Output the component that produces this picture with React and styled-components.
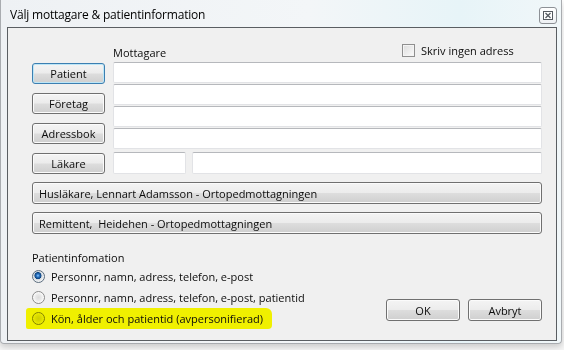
import React from "react";
import styled, { createGlobalStyle, css } from "styled-components";

const GlobalStyle = createGlobalStyle`
  html, body {
    margin: 0;
    padding: 0;
    background: #ffffff;
  }
  body {
    font-family: "Open Sans", "Noto Sans", sans-serif;
    font-size: 11px;
    color: #0c0c0c;
  }
  #root {
    width: 564px;
    height: 350px;
    overflow: hidden;
  }
`;

const Screen = styled.div`
  width: 564px;
  height: 350px;
  background: linear-gradient(#ffffff, #f6f6f6);
`;

const Window = styled.div`
  width: 562px;
  height: 344px;
  box-sizing: border-box;
  display: flex;
  flex-direction: column;
  padding: 0 4px 2px 6px;
  border: 1px solid #a9acb0;
  border-top: none;
  border-radius: 0 0 4px 4px;
  background: linear-gradient(90deg, #eef1f4 0%, #f3f6f8 55%, #e7f4f8 82%, #f1f7f9 100%);
  box-shadow: 0 3px 6px rgba(0, 0, 0, 0.18);
`;

const TitleBar = styled.div`
  height: 27px;
  display: flex;
  align-items: flex-start;
  justify-content: space-between;
  padding-left: 3px;
`;

const Title = styled.span`
  margin-top: 7px;
  font-size: 12px;
  line-height: 16px;
  letter-spacing: -0.2px;
  color: #000;
`;

const CloseButton = styled.div`
  margin-top: 7px;
  width: 18px;
  height: 17px;
  box-sizing: border-box;
  border: 1px solid #8d9196;
  border-radius: 3px;
  background: linear-gradient(#ffffff, #eef1f4);
  display: flex;
  align-items: center;
  justify-content: center;
`;

const Panel = styled.div`
  flex: 1;
  box-sizing: border-box;
  border: 1px solid #5a5e62;
  background: #f0f0f0;
  padding: 14px 14px 0 24px;
  display: flex;
  flex-direction: column;
`;

const HeaderRow = styled.div`
  height: 20px;
  display: grid;
  grid-template-columns: 81px 289px 1fr;
  align-items: center;
`;

const FieldLabel = styled.span`
  grid-column: 2;
  font-size: 11px;
  line-height: 14px;
  padding-top: 2px;
`;

const CheckOption = styled.label`
  display: flex;
  align-items: center;
  gap: 6px;
  align-self: start;
  margin-top: 1px;
  font-size: 11px;
`;

const CheckBox = styled.span`
  width: 13px;
  height: 13px;
  box-sizing: border-box;
  border: 1px solid #8f8f8f;
  background: linear-gradient(135deg, #dcdcdc, #fbfbfb);
  box-shadow: inset 0 0 0 1px #f4f4f4;
`;

const RecipientArea = styled.div`
  display: flex;
  gap: 8px;
`;

const ButtonColumn = styled.div`
  width: 73px;
  display: flex;
  flex-direction: column;
  gap: 9px;
  padding-top: 1px;
`;

const FieldColumn = styled.div`
  flex: 1;
  display: flex;
  flex-direction: column;
  gap: 1px;
`;

const FieldRow = styled.div`
  display: flex;
  gap: 6px;
  margin-top: 2px;
`;

const Field = styled.div`
  height: 22px;
  box-sizing: border-box;
  flex: ${(p) => (p.$width ? `0 0 ${p.$width}px` : "1")};
  background: #ffffff;
  border: 1px solid #e2e3e6;
  border-top-color: #b6b8bc;
  border-radius: 2px;
`;

const buttonSurface = css`
  box-sizing: border-box;
  border: 1px solid #707070;
  border-radius: 3px;
  background: linear-gradient(#f4f4f4 0%, #ececec 48%, #dddddd 52%, #cfcfcf 100%);
  box-shadow: inset 0 0 0 1px #fbfbfb;
  font-family: inherit;
  font-size: 11px;
  color: #0c0c0c;
  padding: 0;
  cursor: default;
`;

const Button = styled.button`
  ${buttonSurface};
  height: 21px;
  width: ${(p) => p.$width || 73}px;
  text-align: center;
  line-height: 18px;
  ${(p) =>
    p.$focused &&
    css`
      border-color: #3c7fb1;
      box-shadow: inset 0 0 0 1px #bde6f7;
    `}
`;

const WideButton = styled.button`
  ${buttonSurface};
  height: 22px;
  width: 100%;
  text-align: left;
  padding-left: 6px;
  line-height: 19px;
`;

const WideStack = styled.div`
  display: flex;
  flex-direction: column;
  gap: 8px;
  margin-top: 8px;
`;

const BottomArea = styled.div`
  display: flex;
  justify-content: space-between;
  margin-top: 16px;
`;

const RadioGroup = styled.div`
  display: flex;
  flex-direction: column;
`;

const GroupLabel = styled.div`
  height: 16px;
  line-height: 16px;
  font-size: 11px;
`;

const RadioRow = styled.div`
  height: 21px;
  display: flex;
  align-items: center;
  gap: 6px;
  font-size: 11px;
  ${(p) =>
    p.$marked &&
    css`
      margin-left: -6px;
      padding-left: 6px;
      width: 240px;
      background: #f0f000;
      border-radius: 3px 6px 4px 2px;
    `}
`;

const Radio = styled.span`
  width: 13px;
  height: 13px;
  box-sizing: border-box;
  border-radius: 50%;
  border: 1px solid #8b8b8b;
  background: radial-gradient(circle at 50% 50%, #dcdcdc 0, #e9e9e9 3px, #f8f8f8 5px, #fefefe 6px);
  flex-shrink: 0;
  ${(p) =>
    p.$checked &&
    css`
      border-color: #5c6d7e;
      background: radial-gradient(circle at 45% 42%, #8ecbff 0, #2a74c4 1.5px, #0d437f 3.2px, #cfd6dc 3.8px, #eef0f2 5.5px);
    `}
  ${(p) =>
    p.$tinted &&
    css`
      mix-blend-mode: multiply;
    `}
`;

const DialogButtons = styled.div`
  align-self: flex-end;
  display: flex;
  gap: 8px;
  margin-bottom: 8px;
`;

const DialogButton = styled(Button)`
  height: 22px;
  width: 74px;
  line-height: 19px;
`;

const CloseIcon = () => (
  <svg width="10" height="9" viewBox="0 0 10 9">
    <rect x="0.5" y="0.5" width="9" height="8" fill="#fff" stroke="#555a60" />
    <path d="M2.5 2 L7.5 7 M7.5 2 L2.5 7" stroke="#555a60" strokeWidth="1.3" />
  </svg>
);

const recipients = ["Patient", "Företag", "Adressbok", "Läkare"];

const patientOptions = [
  { label: "Personnr, namn, adress, telefon, e-post", checked: true },
  { label: "Personnr, namn, adress, telefon, e-post, patientid" },
  { label: "Kön, ålder och patientid (avpersonifierad)", marked: true },
];

export default function App() {
  return (
    <Screen>
      <GlobalStyle />
      <Window>
        <TitleBar>
          <Title>Välj mottagare &amp; patientinformation</Title>
          <CloseButton>
            <CloseIcon />
          </CloseButton>
        </TitleBar>
        <Panel>
          <HeaderRow>
            <FieldLabel>Mottagare</FieldLabel>
            <CheckOption>
              <CheckBox />
              Skriv ingen adress
            </CheckOption>
          </HeaderRow>

          <RecipientArea>
            <ButtonColumn>
              {recipients.map((name, i) => (
                <Button key={name} $focused={i === 0}>
                  {name}
                </Button>
              ))}
            </ButtonColumn>
            <FieldColumn>
              <Field />
              <Field />
              <Field />
              <Field />
              <FieldRow>
                <Field $width={73} />
                <Field />
              </FieldRow>
            </FieldColumn>
          </RecipientArea>

          <WideStack>
            <WideButton>Husläkare, Lennart Adamsson - Ortopedmottagningen</WideButton>
            <WideButton>Remittent,&nbsp; Heidehen - Ortopedmottagningen</WideButton>
          </WideStack>

          <BottomArea>
            <RadioGroup>
              <GroupLabel>Patientinfomation</GroupLabel>
              {patientOptions.map((opt) => (
                <RadioRow key={opt.label} $marked={opt.marked}>
                  <Radio $checked={opt.checked} $tinted={opt.marked} />
                  {opt.label}
                </RadioRow>
              ))}
            </RadioGroup>
            <DialogButtons>
              <DialogButton>OK</DialogButton>
              <DialogButton>Avbryt</DialogButton>
            </DialogButtons>
          </BottomArea>
        </Panel>
      </Window>
    </Screen>
  );
}
